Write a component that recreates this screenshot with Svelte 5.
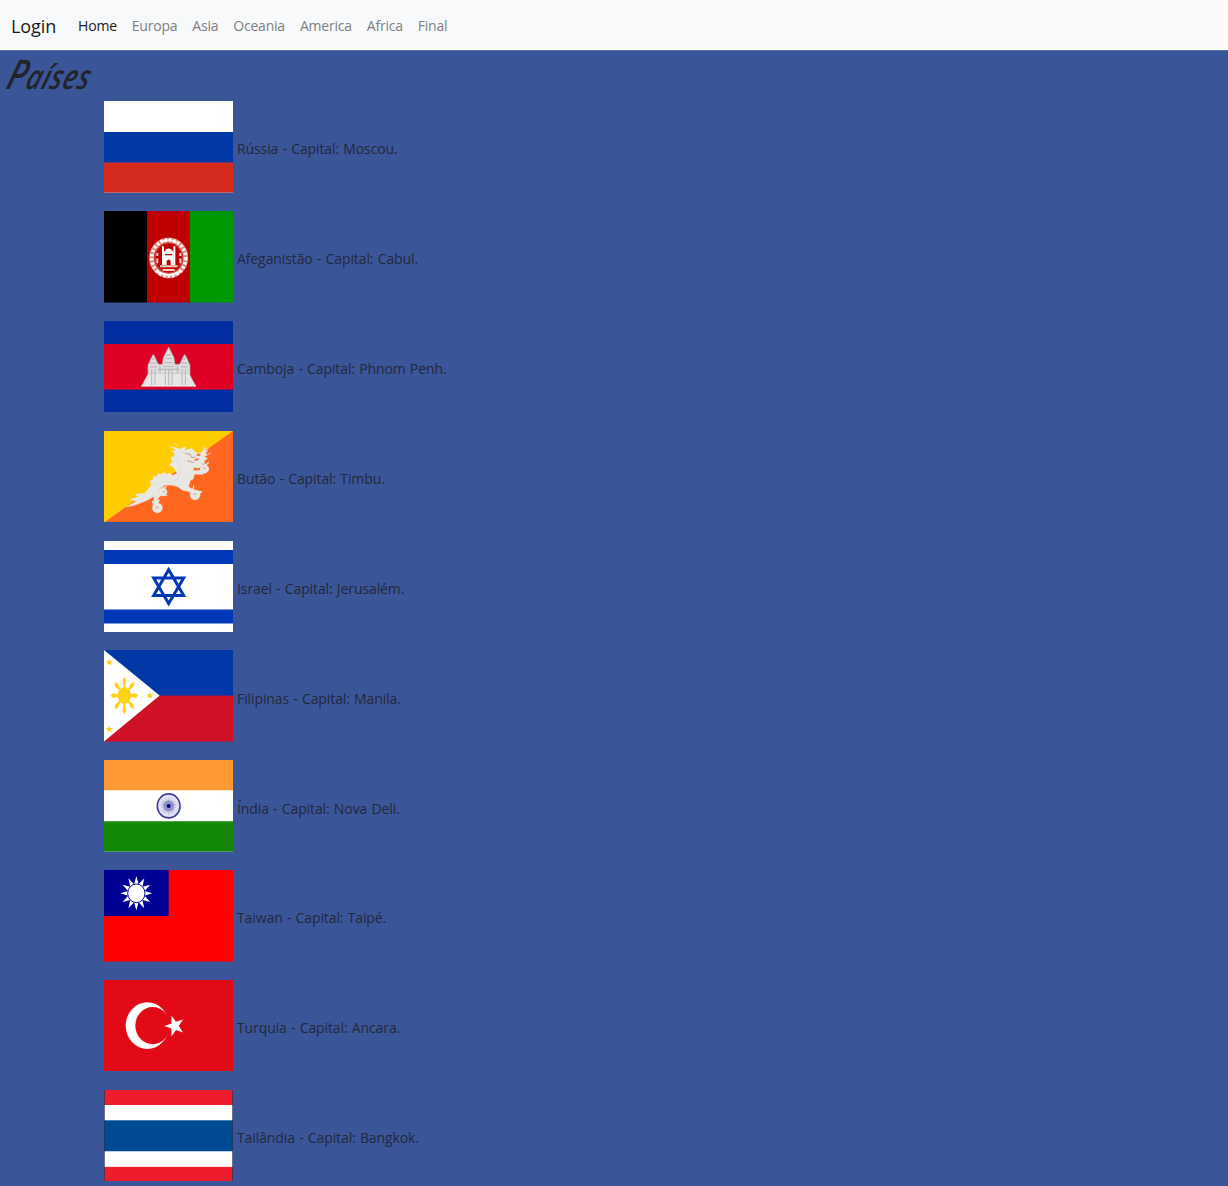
<script>
  const links = ['Home', 'Europa', 'Asia', 'Oceania', 'America', 'Africa', 'Final'];

  const countries = [
    { id: 'ru', name: 'Rússia', capital: 'Moscou' },
    { id: 'af', name: 'Afeganistão', capital: 'Cabul' },
    { id: 'kh', name: 'Camboja', capital: 'Phnom Penh' },
    { id: 'bt', name: 'Butão', capital: 'Timbu' },
    { id: 'il', name: 'Israel', capital: 'Jerusalém' },
    { id: 'ph', name: 'Filipinas', capital: 'Manila' },
    { id: 'in', name: 'Índia', capital: 'Nova Deli' },
    { id: 'tw', name: 'Taiwan', capital: 'Taipé' },
    { id: 'tr', name: 'Turquia', capital: 'Ancara' },
    { id: 'th', name: 'Tailândia', capital: 'Bangkok' }
  ];

  // Points of a star polygon with alternating outer and inner radii.
  function star(cx, cy, outer, inner, count, turn = -90, squash = 1) {
    return Array.from({ length: count * 2 }, (_, i) => {
      const r = i % 2 ? inner : outer;
      const a = ((turn + (i * 180) / count) * Math.PI) / 180;
      return `${(cx + r * Math.cos(a) * squash).toFixed(1)},${(cy + r * Math.sin(a)).toFixed(1)}`;
    }).join(' ');
  }
  const rays = [0, 45, 90, 135, 180, 225, 270, 315];
  const spokes = Array.from({ length: 24 }, (_, i) => i * 15);
</script>

<div class="page">
  <nav>
    <a class="brand" href="#login">Login</a>
    <div class="links">
      {#each links as link, i}
        <a class:active={i === 0} href="#{link.toLowerCase()}">{link}</a>
      {/each}
    </div>
  </nav>

  <h1><span>Países</span></h1>

  <ul>
    {#each countries as c}
      <li>
        <svg class="flag" viewBox="0 0 387 275" preserveAspectRatio="none" aria-hidden="true">
          {#if c.id === 'ru'}
            <rect width="387" height="275" fill="#fff" />
            <rect y="93" width="387" height="93" fill="#0039a6" />
            <rect y="185" width="387" height="90" fill="#d52b1e" />
          {:else if c.id === 'af'}
            <rect x="258" width="129" height="275" fill="#009900" />
            <rect x="129" width="129" height="275" fill="#bf0000" />
            <rect width="129" height="275" fill="#000" />
            <g fill="none" stroke="#fff">
              <ellipse cx="194" cy="141" rx="51" ry="54" stroke="#e08a7e" stroke-width="15" />
              <ellipse cx="194" cy="141" rx="51" ry="54" stroke="#fff" stroke-width="11" stroke-dasharray="7 6" />
              <ellipse cx="194" cy="141" rx="41" ry="46" stroke-width="2" opacity=".5" />
              <path d="M158 181q36 22 72 0M170 94q24-13 48 0" stroke-width="5" />
              <path d="M177 106v56M211 106v56" stroke-width="6" />
              <path d="M160 126v9M160 143v14M229 126v9M229 143v14" stroke-width="6" stroke="#f3cfc8" />
              <path d="M168 166h53M176 177h36" stroke-width="6" stroke="#f3cfc8" />
            </g>
            <path d="M179 162v-37q15-25 30 0v37h-9v-12q-6-9-12 0v12z" fill="#fff" />
            <path d="M183 131h22" stroke="#bf0000" stroke-width="4" />
          {:else if c.id === 'kh'}
            <rect width="387" height="275" fill="#032ea1" />
            <rect y="69" width="387" height="137" fill="#e00025" />
            <g fill="#ddd" stroke="#a5a0a3" stroke-width="2">
              <path d="M132 163v-31l4-8 5-12 7-12 7 12 5 12 4 6h11l3-20 7-14 9-18 9 18 7 14 3 20h13l4-6 5-12 7-12 7 12 5 12 4 8v31z" />
              <path d="M133 158l-20 37h162l-20-37z" fill="#e6e6e6" stroke="#ccc" />
              <path d="M142 114h12M138 126h20M138 138h20M234 114h12M230 126h20M230 138h20M187 102h14M184 113h20M181 125h26M178 137h32M162 145h65" />
              <path d="M143 145v50M153 145v50M184 145v50M194 145v50M204 145v50M234 145v50M244 145v50M168 134v24M220 134v24" fill="none" />
              <path d="M112 195h164" stroke="#eee" stroke-width="4" />
            </g>
          {:else if c.id === 'bt'}
            <rect width="387" height="275" fill="#ffcc00" />
            <path d="M0 275L387 0v275z" fill="#ff661f" />
            <g fill="#e9e7e4" stroke="#e9e7e4" stroke-linejoin="round" stroke-linecap="round">
              <path d="M67 228l30-17-20-5 26-8-9-8 29-4 20-25-6-10 10-5 1-10 10 1 5-10 9 4 8-7 8 6 10-4 6 8 15-6-9-17-14-9 9-9-5-14 10-2 1-11-10-6 15-2-13-12 23 8 20-7-5 11 22-6 8 9 12 8 13-8 7-15v17l10-8-8 13 5 4-10 5 11 5-14 10-4 15-11 5-12-3-2 10 25-1 19-10 2 10-20 13-23-1-3 14-9 5-6 20 21 9 21 4-8 8-36-9-15-2-13-11-17-5-22-1-16 9-5 14 16-2 11 12-16-4-12 12 2 24-12 1-3-31-20 12-39 15z" stroke-width="1" />
              <circle cx="301" cy="114" r="13" /><circle cx="273" cy="192" r="15" /><circle cx="177" cy="183" r="12" /><circle cx="160" cy="231" r="15" />
              <path d="M292 102l7-12 4 15 10-10M257 183l-3-14 13 12 2-16M168 172l1-10 11 11 7-8M148 220l-2-9 12 7 8-10" fill="none" stroke-width="4" />
              <path d="M214 54l-17-6M222 46l-12-9M301 68l9-17M303 74l17-8" fill="none" stroke-width="2" />
            </g>
            <g fill="none" stroke="#c58f66" stroke-width="2.5">
              <path d="M243 67l15 3 4 10 13-2M249 89l21 6M296 113q7-7 7 2M268 192q7-9 9 0M155 232q6-8 9 0M176 182q6-5 5 3" />
            </g>
            <path d="M278 73l11-2M272 88l12-4" stroke="#ff661f" stroke-width="5" />
            <path d="M216 83l12 17 2 25-12 22-22 8-26-4-23 14M230 62l18 7" fill="none" stroke="#d0cdcb" stroke-width="2" stroke-dasharray="5 3" />
          {:else if c.id === 'il'}
            <rect width="387" height="275" fill="#fff" />
            <path d="M0 27h387v42H0zM0 206h387v42H0z" fill="#0038b8" />
            <path d="M194 86l45 78H149zM194 188l45-77H149z" fill="none" stroke="#0038b8" stroke-width="9" />
          {:else if c.id === 'ph'}
            <rect width="387" height="138" fill="#0038a8" />
            <rect y="137" width="387" height="138" fill="#ce1126" />
            <path d="M0 0L167 137 0 275z" fill="#fff" />
            <g fill="#fcd116">
              <ellipse cx="61" cy="137" rx="20" ry="25" />
              {#each rays as angle}
                <path transform="translate(61 137) scale(.74 1) rotate({angle})" d="M-3-21L-7-47 0-56 7-47 3-21z" />
              {/each}
              <polygon points={star(16, 37, 11, 5, 5)} />
              <polygon points={star(16, 238, 11, 5, 5)} />
              <polygon points={star(138, 137, 11, 5, 5)} />
            </g>
          {:else if c.id === 'in'}
            <rect width="387" height="275" fill="#fff" />
            <rect width="387" height="91" fill="#ff9933" />
            <rect y="184" width="387" height="91" fill="#138808" />
            <ellipse cx="194" cy="138" rx="34" ry="36" fill="#e6e6f5" stroke="#3c3c9c" stroke-width="5" />
            {#each spokes as angle}
              <path transform="translate(194 138) rotate({angle})" d="M0-31L-1-15 0 0 1-15z" fill="#8c8cc8" />
            {/each}
            <circle cx="194" cy="138" r="16" fill="#7575bc" opacity=".6" />
            <circle cx="194" cy="138" r="6" fill="#000088" />
          {:else if c.id === 'tw'}
            <rect width="387" height="275" fill="#fe0000" />
            <rect width="194" height="138" fill="#000095" />
            <polygon points={star(97, 70, 52, 28, 12, -90, 0.92)} fill="#fff" />
            <ellipse cx="97" cy="70" rx="26" ry="28" fill="#fff" stroke="#000095" stroke-width="3" />
          {:else if c.id === 'tr'}
            <rect width="387" height="275" fill="#e30a17" />
            <ellipse cx="130" cy="137" rx="65" ry="70" fill="#fff" />
            <ellipse cx="146" cy="137" rx="52" ry="56" fill="#e30a17" />
            <polygon points={star(212, 138, 33, 13, 5, 180, 0.94)} fill="#fff" />
          {:else}
            <rect width="387" height="275" fill="#ef1c2e" />
            <rect y="45" width="387" height="186" fill="#fff" />
            <rect y="91" width="387" height="93" fill="#004b93" />
            <path d="M1 0v275M386 0v275" stroke="#26364f" stroke-width="2.5" />
          {/if}
        </svg>
        <span class="label">{c.name} - Capital: {c.capital}.</span>
      </li>
    {/each}
  </ul>
</div>

<style>
  :global(body) {
    background: #3b5599;
    overflow: hidden;
  }
  .page {
    height: 1186px;
    overflow: hidden;
    color: #212529;
    font: 14px/22px 'Open Sans', 'Noto Sans', sans-serif;
  }
  nav {
    display: flex;
    align-items: center;
    height: 51px;
    padding: 1px 0 0 11px;
    border-bottom: 1px solid #5b70a8;
    box-sizing: border-box;
    background: #f8f9fa;
  }
  a {
    color: #808182;
    text-decoration: none;
  }
  .brand {
    margin-right: 22px;
    color: #1a1a1a;
    font-size: 18px;
    letter-spacing: -0.1px;
  }
  .links {
    display: flex;
    gap: 15px;
    padding-top: 1px;
    font-size: 14px;
    letter-spacing: -0.22px;
  }
  .active {
    color: #1a1a1a;
  }
  h1 {
    height: 50.2px;
    margin: 0;
    padding-left: 2px;
    font: italic 600 34px/44px 'Open Sans', sans-serif;
  }
  h1 span {
    display: inline-block;
    letter-spacing: 1px;
    transform: skewX(-17deg) scaleX(0.77);
    transform-origin: left bottom;
  }
  h1 span::first-letter {
    font-size: 41px;
    line-height: 44px;
  }
  ul {
    display: flex;
    flex-direction: column;
    gap: 18.3px;
    margin: 0;
    padding: 0 0 0 104px;
    list-style: none;
  }
  li {
    display: flex;
    align-items: center;
    gap: 4px;
    height: 91.55px;
    flex-shrink: 0;
  }
  .flag {
    width: 129px;
    height: 91.55px;
    flex-shrink: 0;
  }
  .label {
    padding-top: 5px;
    color: #22293a;
    font-size: 14px;
    letter-spacing: -0.1px;
    word-spacing: 0.7px;
    white-space: nowrap;
  }
</style>
